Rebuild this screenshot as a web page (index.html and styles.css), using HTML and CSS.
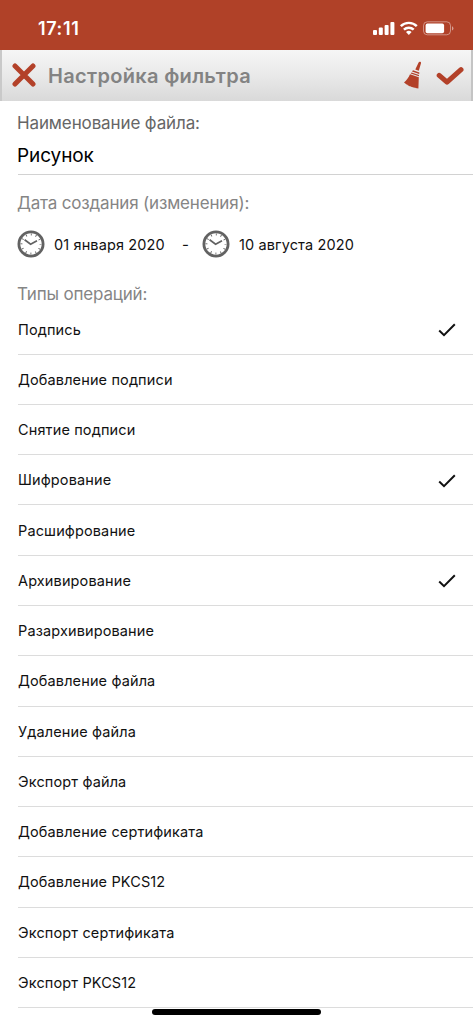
FILE: index.html
```
<!DOCTYPE html>
<html lang="ru">
<head>
    <meta charset="UTF-8">
    <meta name="viewport" content="width=device-width, initial-scale=1.0">
    <title>Настройка фильтра</title>
    <link rel="stylesheet" href="styles.css">
</head>
<body>
    <div class="status-bar">
        <span class="time">17:11</span>
        <svg class="status-icons" width="82" height="16" viewBox="0 0 82 16">
            <g fill="#fff">
                <rect x="0" y="10" width="4" height="5" rx="1"/>
                <rect x="5.8" y="7.6" width="4" height="7.4" rx="1"/>
                <rect x="11.6" y="5" width="4" height="10" rx="1"/>
                <rect x="17.4" y="2" width="4" height="13" rx="1"/>
            </g>
            <g fill="none" stroke="#fff" stroke-width="2.4">
                <path d="M27.8 6.2a11.2 11.2 0 0 1 16 0"/>
                <path d="M30.9 9.7a7 7 0 0 1 9.8 0"/>
            </g>
            <path d="M35.8 15l-2.8-2.9a4.1 4.1 0 0 1 5.6 0z" fill="#fff"/>
            <rect x="50.5" y="1.8" width="27" height="13" rx="3.8" fill="none" stroke="#fff" stroke-opacity=".42"/>
            <rect x="52.6" y="3.6" width="18.5" height="9.6" rx="1.8" fill="#fff"/>
            <path d="M79 6.200a2.400 2.400 0 0 1 0 4.400z" fill="#fff" fill-opacity=".5"/>
        </svg>
    </div>

    <div class="toolbar">
        <svg class="close" width="24" height="24" viewBox="0 0 24 24">
            <path d="M3 3l18 18M21 3L3 21" fill="none" stroke="#b34129" stroke-width="5" stroke-linecap="round"/>
        </svg>
        <h1>Настройка фильтра</h1>
        <svg class="broom" width="20" height="28" viewBox="0 0 20 28" fill="#b34129">
            <path d="M15.6 1.4c.5-1 2.8-.5 2.4.8l-2.2 7.600-3.500-1.200z"/>
            <path d="M10 9.300l6.400 2.300-.2 1.500-7.200-2.500z"/>
            <path d="M8.500 11.400l7.500 2.600-.1 1.300-8.200-2.900z"/>
            <path d="M7 13.200l8.800 3-.4 11.200-3-.4-.2-.5-.7.3-3.400-1-.2-.5-.7.1-2.500-1.200v-.5l-.7.100-3-2.300C3.700 19 5.500 16.600 7 13.200z"/>
        </svg>
        <svg class="apply" width="28" height="20" viewBox="0 0 28 20">
            <path d="M3.200 9.400L11 16.200L25 3.600" fill="none" stroke="#b34129" stroke-width="5" stroke-linecap="round" stroke-linejoin="round"/>
        </svg>
    </div>

    <div class="content">
        <div class="label file-label">Наименование файла:</div>
        <div class="file-name">Рисунок</div>

        <div class="label date-label">Дата создания (изменения):</div>
        <div class="dates">
            <svg class="clock" width="28" height="28" viewBox="0 0 28 28">
                <circle cx="14" cy="14" r="12.1" fill="#fff" stroke="#626262" stroke-width="2.8"/>
                <circle cx="14" cy="14" r="9.5" fill="none" stroke="#626262" stroke-width="2" stroke-dasharray=".9 4.0742" stroke-dashoffset=".45"/>
                <path d="M7.6 9.8L13.6 14.2L20 10.8" fill="none" stroke="#626262" stroke-width="1.7"/>
            </svg>
            <span class="date from">01 января 2020</span>
            <span class="dash">-</span>
            <svg class="clock" width="28" height="28" viewBox="0 0 28 28">
                <circle cx="14" cy="14" r="12.1" fill="#fff" stroke="#626262" stroke-width="2.8"/>
                <circle cx="14" cy="14" r="9.5" fill="none" stroke="#626262" stroke-width="2" stroke-dasharray=".9 4.0742" stroke-dashoffset=".45"/>
                <path d="M7.6 9.8L13.6 14.2L20 10.8" fill="none" stroke="#626262" stroke-width="1.7"/>
            </svg>
            <span class="date">10 августа 2020</span>
        </div>

        <div class="label types-label">Типы операций:</div>
        <ul class="types">
            <li>Подпись
                <svg class="check" width="18" height="14" viewBox="0 0 18 14"><path d="M1.2 7.5L6 12.2L16.8 1.3"/></svg>
            </li>
            <li>Добавление подписи</li>
            <li>Снятие подписи</li>
            <li>Шифрование
                <svg class="check" width="18" height="14" viewBox="0 0 18 14"><path d="M1.2 7.5L6 12.2L16.8 1.3"/></svg>
            </li>
            <li>Расшифрование</li>
            <li>Архивирование
                <svg class="check" width="18" height="14" viewBox="0 0 18 14"><path d="M1.2 7.5L6 12.2L16.8 1.3"/></svg>
            </li>
            <li>Разархивирование</li>
            <li>Добавление файла</li>
            <li>Удаление файла</li>
            <li>Экспорт файла</li>
            <li>Добавление сертификата</li>
            <li>Добавление PKCS12</li>
            <li>Экспорт сертификата</li>
            <li>Экспорт PKCS12</li>
        </ul>
    </div>
    <div class="home-indicator"></div>
</body>
</html>
```
FILE: styles.css
```
* {
    box-sizing: border-box;
}

body {
    margin: 0;
    height: 1024px;
    overflow: hidden;
    position: relative;
    background-color: #fff;
    font-family: Inter, "Liberation Sans", sans-serif;
    color: #111;
}

.status-bar {
    display: flex;
    justify-content: space-between;
    height: 50px;
    padding: 20px 18px 0 38px;
    background-color: #b04128;
    color: #fff;
}

.time {
    font-size: 18px;
    font-weight: 600;
    line-height: 17px;
    letter-spacing: 0.6px;
}

.toolbar {
    display: flex;
    align-items: center;
    height: 51px;
    padding: 0 7px 0 10px;
    border-left: 2px solid #c9c9c9;
    border-right: 2px solid #c4c4c4;
    background: linear-gradient(#f6f6f6, #e9e9e9 50%, #d9d9d9);
}

.toolbar h1 {
    flex: 1;
    margin: 0 0 0 12px;
    font-size: 20px;
    font-weight: 600;
    letter-spacing: 0.32px;
    color: #838383;
}

.close {
    margin-bottom: 1px;
}

.broom {
    margin: 0 13px 2px 0;
}

.content {
    padding-left: 18px;
}

.label {
    margin-left: -1px;
    font-size: 17px;
    line-height: 22px;
    letter-spacing: -0.18px;
    color: #858585;
    white-space: nowrap;
}

.file-label {
    padding-top: 11px;
    letter-spacing: -0.12px;
    color: #666;
}

.file-name {
    height: 41px;
    padding-top: 10px;
    border-bottom: 1px solid #d2d2d2;
    font-size: 19px;
    line-height: 24px;
    letter-spacing: -0.1px;
    text-indent: -1px;
    color: #000;
}

.date-label {
    margin-top: 17px;
}

.dates {
    display: flex;
    align-items: center;
    height: 28px;
    margin: 16px 0 0 -1px;
}

.date {
    margin-left: 9px;
    font-size: 14.5px;
    letter-spacing: 0.12px;
    white-space: nowrap;
}

.from {
    width: 111px;
}

.dash {
    width: 37px;
    padding-left: 17px;
    font-size: 15px;
}

.types-label {
    margin-top: 25px;
}

.types {
    margin: -0.6px 0 0;
    padding: 0;
    list-style: none;
}

.types li {
    display: flex;
    align-items: center;
    justify-content: space-between;
    height: 50.28px;
    padding-right: 17px;
    border-bottom: 1px solid #dcdcdc;
    font-size: 14.5px;
    letter-spacing: 0.13px;
}

.check {
    position: relative;
    top: 1px;
}

.check path {
    fill: none;
    stroke: #111;
    stroke-width: 2;
}

.home-indicator {
    position: absolute;
    left: 152px;
    bottom: 9px;
    width: 169px;
    height: 6px;
    border-radius: 3px;
    background-color: #000;
}
```
